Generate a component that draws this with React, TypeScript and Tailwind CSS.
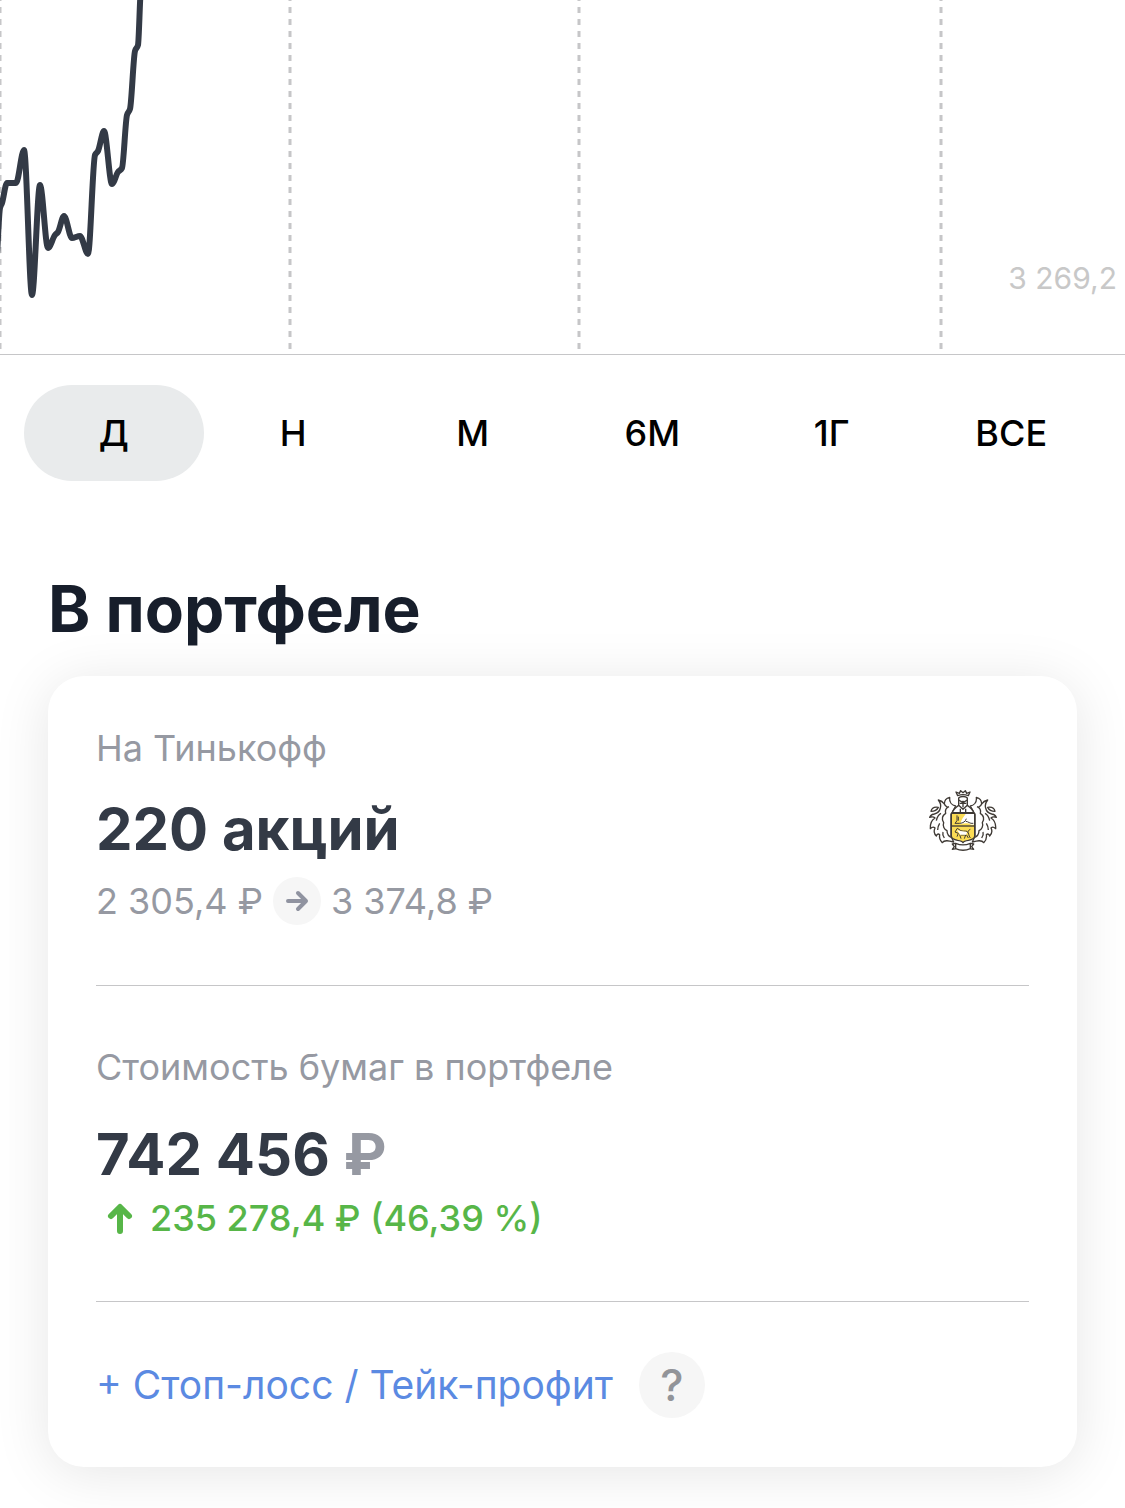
import { useState } from "react";

const periods = ["Д", "Н", "М", "6М", "1Г", "ВСЕ"];

const gridLines = [0, 290, 579, 941];

// Price history points, x grows with time
const points: [number, number][] = [
  [-4, 262], [0, 208], [2, 203], [7, 183], [16, 183], [24, 150], [32, 295], [40, 185],
  [48, 248], [55, 235], [58, 232], [64, 216], [72, 238], [80, 236], [88, 254], [95, 155],
  [98, 151], [104, 131], [112, 184], [118, 172], [122, 168], [127, 115], [130, 109],
  [135, 51], [138, 45], [141, -10],
];

function buildPath(pts: [number, number][]) {
  const slope = (i: number) => {
    if (i === 0 || i === pts.length - 1) return 0;
    const a = (pts[i][1] - pts[i - 1][1]) / (pts[i][0] - pts[i - 1][0]);
    const b = (pts[i + 1][1] - pts[i][1]) / (pts[i + 1][0] - pts[i][0]);
    if (a * b <= 0) return 0;
    return (2 * a * b) / (a + b);
  };
  let d = `M${pts[0][0]} ${pts[0][1]}`;
  for (let i = 1; i < pts.length; i++) {
    const [x0, y0] = pts[i - 1];
    const [x1, y1] = pts[i];
    const h = (x1 - x0) / 3;
    d += `C${x0 + h} ${y0 + h * slope(i - 1)} ${x1 - h} ${y1 - h * slope(i)} ${x1} ${y1}`;
  }
  return d;
}

function Chart() {
  return (
    <div className="relative border-b border-[#c6c6c8]">
      <svg className="block h-[354px] w-full" aria-hidden="true">
        {gridLines.map((x) => (
          <path key={x} d={`M${x} -5V349`} stroke="#c6c6c8" strokeWidth="3" strokeDasharray="6 6" />
        ))}
        <path
          d={buildPath(points)}
          fill="none"
          stroke="#333a46"
          strokeWidth="6"
          strokeLinecap="round"
          strokeLinejoin="round"
        />
      </svg>
      <span className="absolute right-2 bottom-[56px] text-[30px] leading-10 text-[#c8c8c8]">3 269,2</span>
    </div>
  );
}

function CrestHalf() {
  return (
    <g>
      {/* outer leaves */}
      <path
        d="M122 78C112 76 102 68 104 52C96 54 88 58 88 72C84 66 78 62 70 60C78 70 78 78 76 84C74 94 66 100 58 102C52 102 47 106 44 112C50 110 56 110 60 114C50 120 45 132 46 146C50 142 56 140 60 144C56 152 58 162 64 168C66 162 70 160 74 164C72 174 76 182 82 188C88 178 102 182 116 186L108 168V104Z"
        fill="#fff"
      />
      <path d="M102 80C92 84 90 92 92 100C80 108 80 118 86 128C82 138 88 148 96 152C96 164 102 170 112 174" />
      <path d="M88 72C90 78 94 80 98 82" />
      <path d="M78 100C70 104 66 112 64 122M74 130C70 136 68 142 68 150M84 156C82 162 84 168 88 174" />
      <path d="M48 94C50 84 58 80 70 82C66 90 58 94 48 94Z" fill="#fff" />
    </g>
  );
}

function CompanyLogo() {
  return (
    <svg
      className="mt-16 mr-8 h-16 w-[70px] shrink-0"
      viewBox="36 24 210 192"
      fill="none"
      stroke="#3f3a35"
      strokeWidth="4"
      strokeLinejoin="round"
      role="img"
      aria-label="Тинькофф"
    >
      <CrestHalf />
      <g transform="matrix(-1 0 0 1 288 0)">
        <CrestHalf />
      </g>
      {/* helmet and crown */}
      <path d="M131 54C136 48 152 48 157 54V76C166 82 174 90 176 98H112C114 90 122 82 131 76Z" fill="#fff" />
      <path d="M131 60L144 68L157 60M134 70H142M146 70H154M144 62V82M131 76L144 88L157 76M136 86V98M152 86V98" />
      <path d="M128 47L123 36L133 40L137 32L144 38L151 32L155 40L165 36L160 47C150 43 138 43 128 47Z" fill="#fff" />
      {/* shield */}
      <path d="M109 100H179V168C179 176 170 179 160 181C152 182 146 184 144 188C142 184 136 182 128 181C118 179 109 176 109 168Z" fill="#fbdc55" />
      <path d="M152 102H177V134H168C160 128 146 130 136 133C138 120 146 110 152 102Z" fill="#fff" stroke="none" />
      <path d="M109 138H179" />
      <path d="M126 106V122L120 130H134C144 130 152 124 154 116M130 110V122M152 124C160 124 164 132 175 130" strokeWidth="3" />
      <path d="M120 156L127 145L136 151C142 155 150 152 156 154C162 158 160 166 166 174M120 156L130 160L126 170M134 164L138 176M138 165H152L148 176M154 164L160 174M166 148C160 150 160 154 158 158" strokeWidth="3" />
      <path d="M126 150L136 153L156 156L154 164L136 164Z" fill="#fff" stroke="none" />
      {/* ribbon */}
      <path d="M122 190L112 192L118 200L112 208L124 206M166 190L176 192L170 200L176 208L164 206M122 190C136 196 152 196 166 190V206C152 212 136 212 122 206Z" fill="#fff" />
    </svg>
  );
}

export default function App() {
  const [period, setPeriod] = useState("Д");

  return (
    <main className="overflow-hidden bg-white pb-[41px] font-['Inter',sans-serif]">
      <Chart />

      <div className="mx-6 mt-[30px] grid grid-cols-6">
        {periods.map((p) => (
          <button
            key={p}
            type="button"
            aria-pressed={p === period}
            onClick={() => setPeriod(p)}
            className={
              p === period
                ? "h-24 rounded-full bg-[#e9ebec] text-[36px] font-medium text-black"
                : "h-24 rounded-full text-[36px] font-medium text-black"
            }
          >
            {p}
          </button>
        ))}
      </div>

      <h1 className="mx-12 mt-[88px] text-[64px] leading-[80px] font-bold text-[#171e2b]">В портфеле</h1>

      <section className="mx-12 mt-[27px] rounded-[36px] bg-white px-12 pt-12 pb-[49px] shadow-[0_6px_56px_rgba(0,0,0,0.1)]">
        <div className="flex justify-between">
          <div>
            <p className="text-[36px] leading-[48px] text-[#9699a2]">На Тинькофф</p>
            <p className="mt-[21px] text-[58px] leading-[72px] font-bold text-[#333a46]">220 акций</p>
            <div className="mt-3 flex items-center gap-[10px] text-[36px] leading-[48px] text-[#9699a2]">
              <span>2 305,4 ₽</span>
              <span className="flex size-12 items-center justify-center rounded-full bg-[#f6f6f6]">
                <svg className="size-6" viewBox="0 0 24 24" fill="none" stroke="#9093a0" strokeWidth="4" strokeLinecap="round" strokeLinejoin="round">
                  <path d="M3 12H20M13 4L21 12L13 20" />
                </svg>
              </span>
              <span>3 374,8 ₽</span>
            </div>
          </div>
          <CompanyLogo />
        </div>

        <hr className="mt-[60px] border-[#c6c6c8]" />

        <p className="mt-[57px] text-[36px] leading-[48px] text-[#9699a2]">Стоимость бумаг в портфеле</p>
        <p className="mt-[27px] text-[58px] leading-[72px] font-bold text-[#333a46]">
          742 456 <span className="text-[#9699a2]">₽</span>
        </p>
        <p className="mt-1 flex items-center gap-[6px] text-[36px] leading-[48px] font-medium text-[#57b648]">
          <svg className="h-8 w-12" viewBox="0 0 48 32" fill="none" stroke="currentColor" strokeWidth="6" strokeLinecap="round" strokeLinejoin="round">
            <path d="M24 29V6M15 14L24 5L33 14" />
          </svg>
          235 278,4 ₽ (46,39 %)
        </p>

        <hr className="mt-[59px] border-[#c6c6c8]" />

        <div className="mt-[50px] flex items-center gap-[26px]">
          <a href="#stop-loss" className="text-[39px] leading-[48px] text-[#5b8ae2]">
            + Стоп-лосс / Тейк-профит
          </a>
          <button
            type="button"
            aria-label="Подробнее"
            className="size-[66px] rounded-full bg-[#f6f6f6] text-[44px] leading-[66px] font-medium text-[#929499]"
          >
            ?
          </button>
        </div>
      </section>
    </main>
  );
}
